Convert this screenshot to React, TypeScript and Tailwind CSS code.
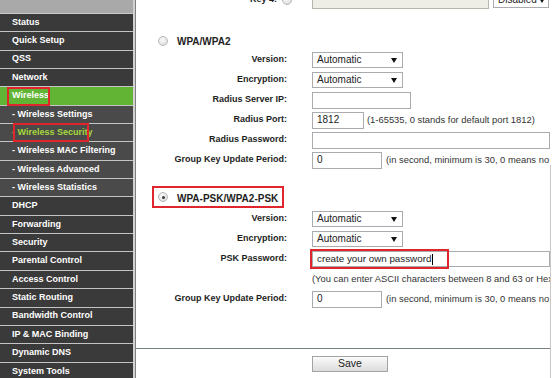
import React from "react";

const Arrow = () => (
  <svg width="6" height="5" viewBox="0 0 6 5" className="shrink-0">
    <path d="M0 0 H6 L3 5 Z" fill="#111" />
  </svg>
);

const Select = ({ text, w, pr = "pr-[5px]" }: { text: string; w: string; pr?: string }) => (
  <div
    className={`${w} ${pr} h-[16px] shrink-0 flex items-center justify-between pl-[4px] border border-[#a9abae] bg-white text-[10px] text-[#222] leading-none`}
  >
    <span>{text}</span>
    <Arrow />
  </div>
);

const Radio = ({ checked = false }: { checked?: boolean }) => (
  <div className="w-[10px] h-[10px] shrink-0 rounded-full border border-[#b8b8b8] bg-[radial-gradient(circle_at_40%_35%,#fafafa,#d6d6d6)] flex items-center justify-center">
    {checked && <div className="w-[3px] h-[3px] rounded-full bg-[#3a3a3a]" />}
  </div>
);

const Row = ({ label, children }: { label: string; children?: React.ReactNode }) => (
  <div className="flex items-center h-[20px]">
    <div className="w-[151px] shrink-0 text-right font-bold text-[9px] text-[#1e1e1e] whitespace-nowrap">{label}</div>
    <div className="ml-[25px] flex items-center flex-1 min-w-0">{children}</div>
  </div>
);

const Input = ({ w, value = "", h = "h-[17px]" }: { w: string; value?: string; h?: string }) => (
  <div
    className={`${w} ${h} shrink-0 flex items-center pl-[4px] border border-[#a9abae] bg-white text-[10px] text-[#222] leading-none`}
  >
    {value}
  </div>
);

const Note = ({ text }: { text: string }) => (
  <span className="ml-[4px] text-[9.4px] text-[#333] whitespace-nowrap">{text}</span>
);

type Item = { label: string; kind: "main" | "sub" | "active-main" | "active-sub" };

const items: Item[] = [
  { label: "Status", kind: "main" },
  { label: "Quick Setup", kind: "main" },
  { label: "QSS", kind: "main" },
  { label: "Network", kind: "main" },
  { label: "Wireless", kind: "active-main" },
  { label: "- Wireless Settings", kind: "sub" },
  { label: "- Wireless Security", kind: "active-sub" },
  { label: "- Wireless MAC Filtering", kind: "sub" },
  { label: "- Wireless Advanced", kind: "sub" },
  { label: "- Wireless Statistics", kind: "sub" },
  { label: "DHCP", kind: "main" },
  { label: "Forwarding", kind: "main" },
  { label: "Security", kind: "main" },
  { label: "Parental Control", kind: "main" },
  { label: "Access Control", kind: "main" },
  { label: "Static Routing", kind: "main" },
  { label: "Bandwidth Control", kind: "main" },
  { label: "IP & MAC Binding", kind: "main" },
  { label: "Dynamic DNS", kind: "main" },
  { label: "System Tools", kind: "main" },
];

const itemClass = (k: Item["kind"]) => {
  switch (k) {
    case "main":
      return "bg-[#3a3a3a] text-white";
    case "sub":
      return "bg-[#4a4a4a] text-white";
    case "active-main":
      return "bg-[#62b534] text-white";
    case "active-sub":
      return "bg-[#4a4a4a] text-[#a6d83a]";
  }
};

export default function App() {
  return (
    <div className="w-[553px] h-[378px] overflow-hidden flex bg-white font-['Liberation_Sans',Arial,sans-serif]">
      {/* Sidebar */}
      <div className="relative w-[133px] shrink-0 h-full bg-[#3a3a3a] overflow-hidden">
        <div className="h-[13.8px] bg-[#a9a9a9] border-b border-[#c9c9c9]" />
        {items.map((it) => (
          <div
            key={it.label}
            className={`h-[18.37px] flex items-center pl-[12px] border-b border-[#c4c4c4] font-bold text-[9px] whitespace-nowrap ${itemClass(it.kind)}`}
          >
            {it.label}
          </div>
        ))}
        <div className="absolute left-[7px] top-[87px] w-[43px] h-[19px] border-2 border-[#e0262c]" />
        <div className="absolute left-[13px] top-[123px] w-[76px] h-[19px] border-2 border-[#e0262c]" />
      </div>
      {/* gap strip */}
      <div className="w-[2px] shrink-0 h-full bg-[#d2d2d2]" />
      {/* Content */}
      <div className="w-[415px] shrink-0 h-full flex flex-col border-l border-[#7f7f7f]">
        <div className="h-[349px] shrink-0 border-b border-[#75807f] overflow-hidden">
          <div className="-mt-[10px] flex flex-col">
            {/* Key 4 row */}
            <div className="flex items-center h-[20px]">
              <div className="w-[156px] shrink-0 flex items-center justify-end font-bold text-[9px] text-[#1e1e1e]">
                <span>Key 4:</span>
                <div className="ml-[5px]">
                  <Radio />
                </div>
              </div>
              <div className="ml-[20px] flex items-center">
                <div className="w-[177px] h-[17px] border border-[#b5b5ad] bg-[#efeee6]" />
                <div className="ml-[4px]">
                  <Select text="Disabled" w="w-[56px]" pr="pr-[3px]" />
                </div>
              </div>
            </div>

            {/* WPA/WPA2 heading */}
            <div className="mt-[22px] h-[18px] flex items-center pl-[22px]">
              <Radio />
              <span className="ml-[9px] mt-[1px] font-bold text-[10px] text-[#1e1e1e]">WPA/WPA2</span>
            </div>
            <Row label="Version:">
              <Select text="Automatic" w="w-[91px]" />
            </Row>
            <Row label="Encryption:">
              <Select text="Automatic" w="w-[91px]" />
            </Row>
            <Row label="Radius Server IP:">
              <Input w="w-[99px]" />
            </Row>
            <Row label="Radius Port:">
              <Input w="w-[52px]" value="1812" />
              <span className="ml-[3px] text-[9.4px] text-[#333] whitespace-nowrap">
                (1-65535, 0 stands for default port 1812)
              </span>
            </Row>
            <Row label="Radius Password:">
              <div className="flex-1 h-[17px] border border-[#a9abae] bg-white" />
            </Row>
            <Row label="Group Key Update Period:">
              <Input w="w-[70px]" value="0" />
              <Note text="(in second, minimum is 30, 0 means no update)" />
            </Row>

            {/* WPA-PSK heading */}
            <div className="mt-[16px] ml-[16px] w-[132px] h-[22px] border-2 border-[#e0262c] flex items-center pl-[4px]">
              <Radio checked />
              <span className="ml-[9px] mt-[3px] font-bold text-[10px] text-[#1e1e1e] whitespace-nowrap">
                WPA-PSK/WPA2-PSK
              </span>
            </div>
            <div className="mt-[1px]" />
            <Row label="Version:">
              <Select text="Automatic" w="w-[91px]" />
            </Row>
            <Row label="Encryption:">
              <Select text="Automatic" w="w-[91px]" />
            </Row>
            <Row label="PSK Password:">
              <div className="relative flex-1 h-[16px] flex items-center pl-[4px] border border-[#a9abae] bg-white text-[9.8px] text-[#222] leading-none whitespace-nowrap">
                <span>create your own password</span>
                <span className="ml-[1px] w-px h-[11px] bg-black" />
                <div className="absolute -left-[3px] -top-[3px] w-[139px] h-[20px] border-2 border-[#e0262c]" />
              </div>
            </Row>
            <div className="h-[20px] flex items-center pl-[176px] text-[9.4px] text-[#333] whitespace-nowrap">
              (You can enter ASCII characters between 8 and 63 or Hexadecimal characters between 8 and 64.)
            </div>
            <Row label="Group Key Update Period:">
              <Input w="w-[70px]" value="0" />
              <Note text="(in second, minimum is 30, 0 means no update)" />
            </Row>
          </div>
        </div>
        <div className="pt-[7px] pl-[176px]">
          <div className="w-[76px] h-[16px] flex items-center justify-center border border-[#a3a3a3] bg-gradient-to-b from-[#fbfbfb] to-[#dcdcdc] text-[10.5px] text-[#222]">
            Save
          </div>
        </div>
      </div>
      {/* right strip */}
      <div className="flex-1 h-full flex flex-col">
        <div className="h-[165px] shrink-0" />
        <div className="flex-1 border-l border-[#c8c8c8]" />
      </div>
    </div>
  );
}
